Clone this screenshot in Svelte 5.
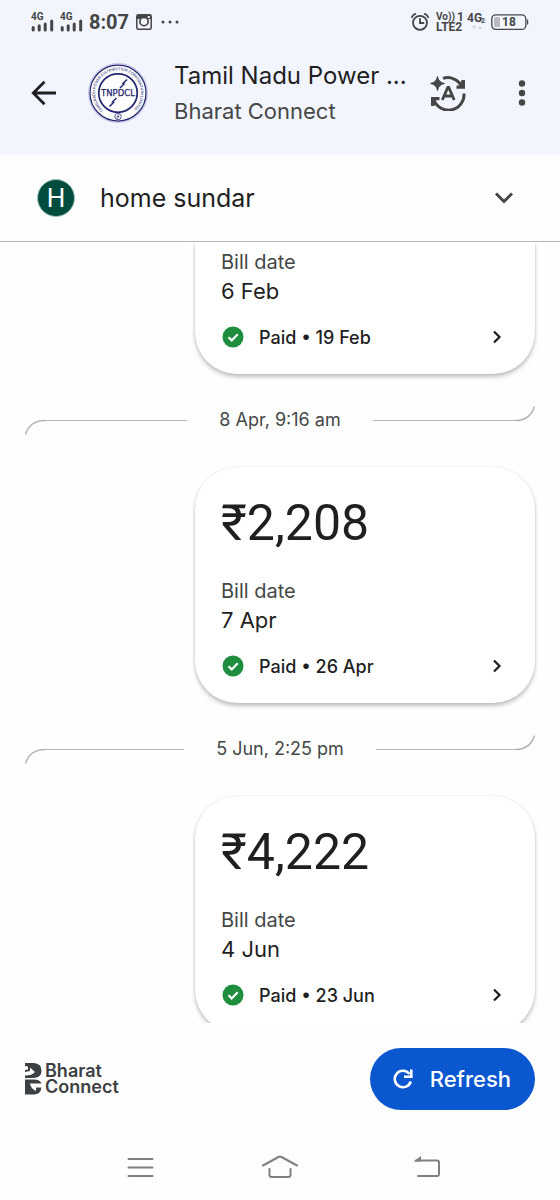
<!--
  Biller history screen
  Past bills of one linked account, with a refresh action pinned below the feed
-->
<script lang="ts">
  type Bill = {
    amount?: string;
    billDate: string;
    paidOn: string;
  };

  type Entry = Bill & { postedAt?: string };

  const biller = 'Tamil Nadu Power ...';
  const network = 'Bharat Connect';
  const account = 'home sundar';

  // an entry without an amount is the tail of a card scrolled under the account bar
  const entries: Entry[] = [
    { billDate: '6 Feb', paidOn: '19 Feb' },
    { postedAt: '8 Apr, 9:16 am', amount: '₹2,208', billDate: '7 Apr', paidOn: '26 Apr' },
    { postedAt: '5 Jun, 2:25 pm', amount: '₹4,222', billDate: '4 Jun', paidOn: '23 Jun' }
  ];
</script>

{#snippet signal()}
  <svg class="status__signal" viewBox="0 0 24 20" aria-hidden="true">
    <text x="0" y="8" class="status__tiny">4G</text>
    <path d="M2.2 15.5v2.5M8.2 13.8v4.2M14.2 12v6M20.7 9v9" stroke="currentColor" stroke-width="3" stroke-linecap="round" />
  </svg>
{/snippet}

<div class="screen">
  <header class="top">
    <div class="status">
      {@render signal()}
      {@render signal()}
      <span class="status__time">8:07</span>
      <svg class="status__camera" viewBox="0 0 16 16" fill="none" stroke="currentColor" aria-hidden="true">
        <rect x="0.8" y="0.8" width="14.4" height="14.4" rx="1.5" stroke-width="1.5" />
        <path d="M1 1h14v4H1z" fill="currentColor" stroke="none" />
        <circle cx="8" cy="7.5" r="4.2" fill="#f2f5fe" stroke-width="1.7" />
        <path d="M11.8 2h2v2h-2z" fill="#f2f5fe" stroke="none" />
      </svg>
      <svg class="status__more" viewBox="0 0 18 4" fill="currentColor" aria-hidden="true">
        <circle cx="2" cy="2" r="1.5" /><circle cx="9" cy="2" r="1.5" /><circle cx="16" cy="2" r="1.5" />
      </svg>

      <svg class="status__alarm" viewBox="0 0 18 18" fill="none" stroke="currentColor" stroke-width="1.8" stroke-linecap="round" aria-hidden="true">
        <circle cx="9" cy="9.8" r="7" />
        <path d="M9 5.8v4.2h3.6M0.9 4.2Q1.8 1.8 4.2 0.9M17.1 4.2Q16.2 1.8 13.8 0.9" />
      </svg>
      <svg class="status__volte" viewBox="0 0 28 24" aria-hidden="true">
        <text x="0" y="10" class="status__tiny">Vo))</text>
        <text x="21" y="11" class="status__small">1</text>
        <text x="0" y="21" class="status__small">LTE2</text>
      </svg>
      <svg class="status__net" viewBox="0 0 19 20" aria-hidden="true">
        <text x="0" y="10" class="status__small">4G</text>
        <text x="14" y="11" class="status__sub">2</text>
        <path d="M5 14h4l-2 3zM11 17h4l-2-3z" fill="#cfd2d9" />
      </svg>
      <svg class="status__battery" viewBox="0 0 38 18" aria-hidden="true">
        <rect x="0.8" y="1.8" width="34" height="14.6" rx="4" fill="none" stroke="currentColor" stroke-width="1.3" />
        <path d="M36 6.5h1.2v5H36z" fill="currentColor" />
        <rect x="3" y="4" width="6" height="10" rx="1.5" fill="#b9bbc3" />
        <text x="11" y="13" class="status__charge">18</text>
      </svg>
    </div>

    <div class="bar">
      <button class="icon-button" aria-label="Back">
        <svg width="26" height="26" viewBox="0 0 26 26" fill="none" stroke="#1f1f1f" stroke-width="2.8">
          <path d="M25 13H3M13.5 1.8L2.3 13l11.2 11.2" />
        </svg>
      </button>

      <svg class="bar__logo" viewBox="0 0 120 120" role="img" aria-label="TNPDCL">
        <defs>
          <path id="seal-ring" d="M31 95A45.500 45.500 0 1 1 89 95" />
        </defs>
        <circle cx="60" cy="60" r="58.5" fill="#fff" stroke="#c9cbe8" stroke-width="3" />
        <circle cx="60" cy="60" r="56" fill="none" stroke="#23276f" stroke-width="2.5" />
        <circle cx="60" cy="60" r="38.5" fill="#fff" stroke="#23276f" stroke-width="3.5" />
        <text class="seal-text"><textPath href="#seal-ring">TAMILNADU POWER DISTRIBUTION CORPORATION LIMITED</textPath></text>
        <path d="M78 33l-8 8 2 1-8 8M57 70l-8 8 2 1-8 8" fill="none" stroke="#23276f" stroke-width="3" />
        <text x="60" y="66" class="seal-name" text-anchor="middle">TNPDCL</text>
        <circle cx="60" cy="107" r="6.5" fill="#fff" stroke="#23276f" stroke-width="1.5" />
        <path d="M63 102l-5 5h4l-5 5" fill="none" stroke="#23276f" stroke-width="1.5" />
      </svg>

      <div class="bar__titles">
        <h1 class="bar__title">{biller}</h1>
        <p class="bar__subtitle">{network}</p>
      </div>

      <button class="icon-button" aria-label="Translate">
        <svg width="36" height="36" viewBox="0 0 36 36" fill="none" stroke="#444746" stroke-width="3">
          <path d="M13 3.4A15.5 15.5 0 0 1 32 12" />
          <path d="M34 18.5A15.500 15.500 0 0 1 4 25" />
          <path d="M35 5v8.700h-8.500v-3.200h3.500L31.500 5zM1 31v-9h8.500v3.200H6L4.500 31z" fill="#444746" stroke="none" />
          <path d="M7.500 1.500Q8.500 7.500 14.500 8.500 8.500 9.500 7.500 15.500 6.500 9.500 0.500 8.500 6.500 7.500 7.500 1.500z" fill="#444746" stroke-width="1" />
          <path d="M12.300 25L17.800 12.500h1L24.200 25M14.500 21h7.600" stroke-width="2.800" />
        </svg>
      </button>
      <button class="icon-button" aria-label="More options">
        <svg width="8" height="26" viewBox="0 0 8 26" fill="#444746">
          <circle cx="4" cy="3.500" r="3.200" /><circle cx="4" cy="13" r="3.200" /><circle cx="4" cy="22.500" r="3.200" />
        </svg>
      </button>
    </div>
  </header>

  <button class="account" aria-expanded="false">
    <span class="account__avatar">H</span>
    <span class="account__name">{account}</span>
    <svg width="20" height="12" viewBox="0 0 20 12" fill="none" stroke="#444746" stroke-width="3" aria-hidden="true">
      <path d="M2 1.500l8 8 8-8" />
    </svg>
  </button>

  <main class="feed">
    {#each entries as entry}
      {#if entry.postedAt}
        <div class="divider">
          <svg width="20" height="30" viewBox="0 0 20 30" fill="none" stroke="#b4b6b8" stroke-width="1.5" aria-hidden="true">
            <path d="M0.500 29.500C3.500 20 11 15.500 20 15.500" />
          </svg>
          <span class="divider__line"></span>
          <time class="divider__time">{entry.postedAt}</time>
          <span class="divider__line"></span>
          <svg width="20" height="30" viewBox="0 0 20 30" fill="none" stroke="#b4b6b8" stroke-width="1.5" aria-hidden="true">
            <path d="M0 15.500C9 15.500 16.500 11 19.500 1.500" />
          </svg>
        </div>
      {/if}

      <article class="card" class:card--tail={!entry.amount}>
        {#if entry.amount}
          <p class="card__amount">{entry.amount}</p>
        {/if}
        <p class="card__label">Bill date</p>
        <p class="card__date">{entry.billDate}</p>
        <button class="card__status">
          <svg width="24" height="24" viewBox="0 0 24 24" aria-hidden="true">
            <circle cx="12" cy="12" r="10.5" fill="#1e8e3e" />
            <path d="M7.500 12.300l3.200 3.100 6-6.200" fill="none" stroke="#fff" stroke-width="2.2" />
          </svg>
          <span class="card__paid">Paid • {entry.paidOn}</span>
          <svg width="10" height="14" viewBox="0 0 10 14" fill="none" stroke="#1f1f1f" stroke-width="2.2" aria-hidden="true">
            <path d="M2 1.500L7.500 7 2 12.500" />
          </svg>
        </button>
      </article>
    {/each}
  </main>

  <footer class="actions">
    <div class="brand">
      <svg width="17" height="32" viewBox="0 0 17 32" aria-hidden="true">
        <path d="M0 0H9Q16.500 0.500 16.500 7.500T9 15H0V12.500Q7 12.500 10 9L5 4.500V8L0 9V7L3 6.500V3.500L0 3z" fill="#3c4043" />
        <path d="M0 16.500H9Q15 16.500 16.500 20.500H5Q6 26 11 28V24.500H16.500Q15.500 31.500 9 31.500H0z" fill="#3c4043" />
      </svg>
      <span class="brand__name">Bharat<br />Connect</span>
    </div>
    <button class="refresh">
      <svg width="20" height="20" viewBox="0 0 20 20" fill="none" stroke="#fff" stroke-width="2.6" aria-hidden="true">
        <path d="M17.800 12.500A8.200 8.200 0 1 1 16.500 5" />
        <path d="M18.300 0.500v7.300h-7.300" />
      </svg>
      Refresh
    </button>
  </footer>

  <nav class="system">
    <button class="system__key" aria-label="Recent apps">
      <svg width="48" height="32" viewBox="0 0 48 32">
        <path d="M12.500 7h24M12.500 15.500h24M12.500 24h24" />
      </svg>
    </button>
    <button class="system__key" aria-label="Home">
      <svg width="48" height="32" viewBox="0 0 48 32">
        <path d="M7 13.500L22.500 5q1.500-.8 3 0L41 13.500M13.500 17v6q0 2 2 2h17q2 0 2-2v-6" />
      </svg>
    </button>
    <button class="system__key" aria-label="Back">
      <svg width="48" height="32" viewBox="0 0 48 32">
        <path d="M20 8.500h21q2 0 2 2V22q0 2-2 2H22" />
        <path d="M17.500 9.400l7.500-5.400v5.400z" fill="#808080" stroke="none" />
      </svg>
    </button>
  </nav>
</div>

<style>
  :global(body) {
    margin: 0;
    background: #fefefe;
  }

  .screen {
    display: flex;
    flex-direction: column;
    height: 100vh;
    overflow: hidden;
    font-family: Inter, Roboto, sans-serif;
    color: #1f1f1f;
    background: #fefefe;
  }

  button {
    padding: 0;
    border: 0;
    background: none;
    color: inherit;
    font: inherit;
    cursor: pointer;
  }

  svg {
    display: block;
    flex-shrink: 0;
  }

  h1,
  p {
    margin: 0;
  }

  .top {
    padding-bottom: 11px;
    background: #f2f5fe;
  }

  .status {
    display: flex;
    align-items: center;
    height: 44px;
    padding: 0 31px;
    font-family: Roboto, sans-serif;
    color: #444746;
  }

  .status text {
    fill: currentColor;
  }

  .status__signal {
    width: 24px;
    height: 20px;
    margin-right: 5px;
  }

  .status__tiny {
    font-size: 10px;
    font-weight: 700;
  }

  .status__small {
    font-size: 12px;
    font-weight: 700;
  }

  .status__sub {
    font-size: 7px;
    font-weight: 700;
  }

  .status__charge {
    font-size: 12px;
    font-weight: 700;
  }

  .status__time {
    font-size: 20px;
    font-weight: 700;
  }

  .status__camera {
    width: 16px;
    height: 16px;
    margin: 0 9px 0 7px;
  }

  .status__more {
    width: 18px;
    height: 4px;
    margin-right: auto;
  }

  .status__alarm {
    width: 18px;
    height: 18px;
    margin-right: 7px;
  }

  .status__volte {
    width: 28px;
    height: 24px;
    margin-right: 3px;
  }

  .status__net {
    width: 19px;
    height: 20px;
    margin-right: 5px;
  }

  .status__battery {
    width: 38px;
    height: 18px;
  }

  .bar {
    display: flex;
    align-items: center;
    height: 98px;
    padding: 0 34px 2px 31px;
  }

  .icon-button {
    display: flex;
    align-items: center;
    justify-content: center;
  }

  .bar__logo {
    width: 60px;
    height: 60px;
    margin: 0 26px 0 31px;
  }

  .seal-text {
    font-size: 8px;
    font-weight: 500;
    font-family: Roboto, sans-serif;
    fill: #55598f;
  }

  .seal-name {
    font-family: "DejaVu Sans", sans-serif;
    font-size: 17px;
    fill: #23276f;
    stroke: #23276f;
    stroke-width: 0.5;
  }

  .bar__titles {
    flex: 1;
    min-width: 0;
  }

  .bar__title {
    overflow: hidden;
    font-size: 24px;
    font-weight: 400;
    line-height: 36px;
    white-space: nowrap;
    text-overflow: ellipsis;
  }

  .bar__subtitle {
    font-size: 22px;
    line-height: 34px;
    color: #444746;
  }

  .bar .icon-button:last-child {
    margin-left: 52px;
  }

  .account {
    display: flex;
    flex-shrink: 0;
    align-items: center;
    height: 87px;
    padding: 0 46px 0 37px;
    border-bottom: 1px solid #b4b6b8;
    text-align: left;
  }

  .account__avatar {
    display: flex;
    align-items: center;
    justify-content: center;
    box-sizing: border-box;
    width: 38px;
    height: 38px;
    border: 1px solid #9cc3b9;
    border-radius: 50%;
    background: #004d40;
    color: #fff;
    font-family: Roboto, sans-serif;
    font-size: 26px;
  }

  .account__name {
    flex: 1;
    margin-left: 25px;
    font-size: 25px;
  }

  .feed {
    display: flex;
    flex: 1;
    flex-direction: column;
    min-height: 0;
    padding: 0 25px;
    overflow-y: auto;
    scrollbar-width: none;
  }

  .divider {
    display: flex;
    flex-shrink: 0;
    align-items: center;
    margin: 31px 0 32px;
  }

  .divider__line {
    flex: 1;
    height: 1px;
    background: #b4b6b8;
  }

  .divider__time {
    padding: 0 32px;
    font-size: 18px;
    line-height: 28px;
    color: #444746;
  }

  .card {
    flex-shrink: 0;
    align-self: flex-end;
    box-sizing: border-box;
    width: calc(100% * 2 / 3);
    padding: 24px 25px 25px 26px;
    border-radius: 42px;
    background: #fff;
    box-shadow: 0 3px 4px rgba(0, 0, 0, 0.24), 0 0 2px rgba(0, 0, 0, 0.1);
  }

  .card--tail {
    padding-top: 6px;
    border-radius: 0 0 42px 42px;
  }

  .card__amount {
    margin-bottom: 22px;
    font-family: Roboto, sans-serif;
    font-size: 50px;
    line-height: 64px;
  }

  .card__label {
    font-size: 20px;
    line-height: 28px;
    color: #444746;
  }

  .card__date {
    font-size: 22px;
    line-height: 30px;
  }

  .card__status {
    display: flex;
    align-items: center;
    width: 100%;
    height: 24px;
    margin-top: 19px;
    padding-right: 8px;
    text-align: left;
  }

  .card__paid {
    flex: 1;
    margin-left: 14px;
    font-size: 18px;
    font-weight: 500;
  }

  .actions {
    display: flex;
    flex-shrink: 0;
    align-items: center;
    justify-content: space-between;
    height: 112px;
    padding: 0 25px;
  }

  .brand {
    display: flex;
    align-items: center;
    gap: 3px;
    color: #3c4043;
  }

  .brand__name {
    font-size: 18px;
    font-weight: 600;
    line-height: 16px;
  }

  .refresh {
    display: flex;
    align-items: center;
    gap: 17px;
    height: 62px;
    padding: 0 24px 0 23px;
    border-radius: 31px;
    background: #0b57d0;
    color: #fff;
    font-size: 22px;
    font-weight: 500;
  }

  .system {
    display: grid;
    flex-shrink: 0;
    grid-template-columns: repeat(3, 1fr);
    height: 65px;
    padding: 0 70px;
  }

  .system__key {
    display: flex;
    align-items: center;
    justify-content: center;
  }

  .system__key svg {
    fill: none;
    stroke: #808080;
    stroke-width: 2;
    stroke-linecap: round;
  }
</style>
